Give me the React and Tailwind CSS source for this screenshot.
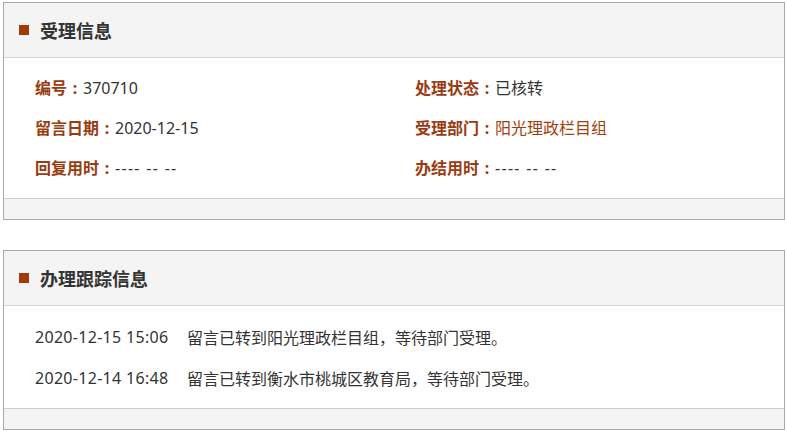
const font = { fontFamily: '"Microsoft YaHei", "Noto Sans", "Noto Sans CJK SC", sans-serif' };

const Panel = ({ title, children, bodyClass }) => (
    <div className="border border-[#aaaaaa] bg-white">
        <div className="h-[55px] flex items-center bg-[#f4f4f4] border-b border-[#d4d4d4] pl-[15px]">
            <span className="w-[10px] h-[10px] bg-[#a33a06] mr-[11px]" />
            <span className="text-[18px] font-bold text-[#333333] leading-none" style={{ fontFamily: '"Noto Sans CJK SC", sans-serif' }}>{title}</span>
        </div>
        <div className={bodyClass}>{children}</div>
        <div className="h-[21px] bg-[#f4f4f4] border-t border-[#d0d0d0]" />
    </div>
);

const Field = ({ label, value, link, dashes }) => (
    <div className="h-10 flex items-center text-[16px]">
        <span className="font-bold text-[#9a3b12]">{label}</span>
        <span className="font-bold text-[#9a3b12] inline-block w-4 text-center">:</span>
        <span className={`${link ? 'text-[#a0410d]' : 'text-[#333333]'} ${dashes ? 'tracking-[1.3px]' : ''}`}>{value}</span>
    </div>
);

const tracks = [
    { time: '2020-12-15 15:06', text: '留言已转到阳光理政栏目组，等待部门受理。' },
    { time: '2020-12-14 16:48', text: '留言已转到衡水市桃城区教育局，等待部门受理。' },
];

export default function App() {
    return (
        <div className="pt-[2px] pl-[3px] w-[785px] bg-white" style={font}>
            <Panel title="受理信息" bodyClass="h-[140px] pt-[10px] pl-[31px] grid grid-cols-[380px_1fr] content-start">
                <Field label="编号" value="370710" />
                <Field label="处理状态" value="已核转" />
                <Field label="留言日期" value="2020-12-15" />
                <Field label="受理部门" value="阳光理政栏目组" link />
                <Field label="回复用时" value="---- -- --" dashes />
                <Field label="办结用时" value="---- -- --" dashes />
            </Panel>
            <div className="mt-[30px]">
                <Panel title="办理跟踪信息" bodyClass="h-[102px] pt-[10px] pl-[31px]">
                    {tracks.map((t) => (
                        <div key={t.time} className="h-[41px] flex items-center text-[16px] text-[#333333]">
                            <span className="w-[152px] tracking-[0.3px]">{t.time}</span>
                            <span style={{ fontFamily: '"Noto Sans CJK SC", sans-serif' }}>{t.text}</span>
                        </div>
                    ))}
                </Panel>
            </div>
        </div>
    );
}
